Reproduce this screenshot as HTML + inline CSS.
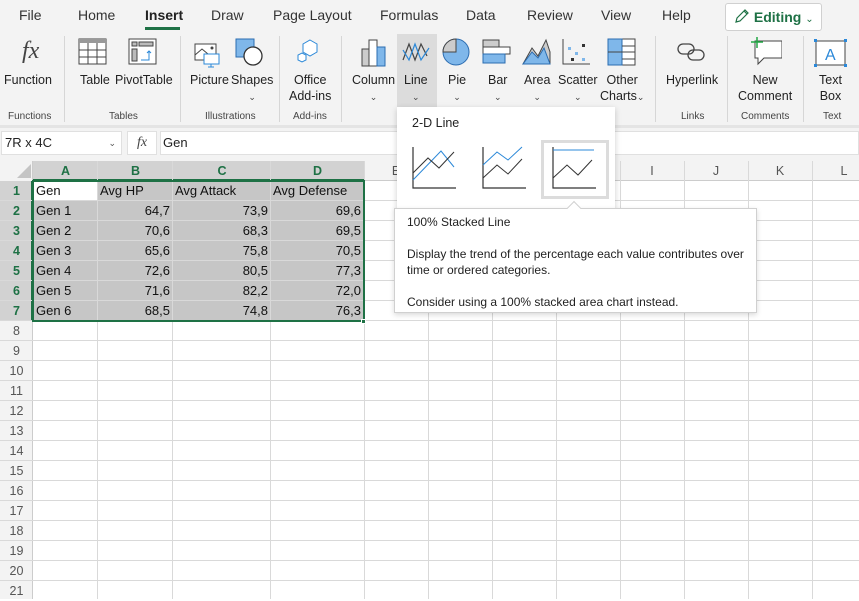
<!DOCTYPE html>
<html><head><meta charset="utf-8"><style>
*{margin:0;padding:0;box-sizing:border-box}
body{width:859px;height:599px;overflow:hidden;background:#fff;font-family:"Liberation Sans",sans-serif;font-size:13px;color:#222;position:relative}
.a{position:absolute}
.tab{position:absolute;top:7px;font-size:14px;color:#333}
.lbl{position:absolute;font-size:12.5px;color:#222;text-align:center;line-height:16px}
.gl{position:absolute;top:111px;font-size:10px;color:#444;text-align:center}
.sep{position:absolute;top:36px;width:1px;height:86px;background:#d6d6d6}
.chev{font-size:9px;color:#444}
.vl{position:absolute;top:161px;width:1px;height:438px;background:#d9d9d9}
.hl{position:absolute;left:0;width:859px;height:1px;background:#d9d9d9}
.rh{position:absolute;left:0;width:33px;text-align:center;font-size:12.5px;color:#555;line-height:20px}
.ch{position:absolute;top:161px;height:20px;line-height:20px;text-align:center;font-size:12.5px;color:#555}
.c{position:absolute;height:20px;line-height:20px;font-size:13px;color:#111;padding:0 3px}
.r{text-align:right}
</style></head><body>
<div class="a" style="left:0;top:0;width:859px;height:127px;background:#f3f3f3"></div>
<div class="a" style="left:0;top:125px;width:859px;height:3px;background:#e4e4e4"></div>
<div class="tab" style="left:19px">File</div>
<div class="tab" style="left:78px">Home</div>
<div class="tab" style="left:145px;font-weight:bold;color:#222">Insert</div>
<div class="a" style="left:145px;top:27px;width:35px;height:3px;background:#1e7145"></div>
<div class="tab" style="left:211px">Draw</div>
<div class="tab" style="left:273px">Page Layout</div>
<div class="tab" style="left:380px">Formulas</div>
<div class="tab" style="left:466px">Data</div>
<div class="tab" style="left:527px">Review</div>
<div class="tab" style="left:601px">View</div>
<div class="tab" style="left:662px">Help</div>
<div class="a" style="left:725px;top:3px;width:97px;height:28px;background:#fff;border:1px solid #d0d0d0;border-radius:3px;color:#1e7145;font-size:14px;font-weight:bold;line-height:26px;padding-left:8px">
<svg width="16" height="16" viewBox="0 0 16 16" style="vertical-align:-2px"><path d="M2 14 L3 10 L11 2 L14 5 L6 13 Z M10 3 L13 6" fill="none" stroke="#1e7145" stroke-width="1.2"/></svg> Editing <span style="font-weight:normal;font-size:10px">&#8964;</span></div>

<div class="a" style="left:22px;top:38px;font-family:'Liberation Serif',serif;font-style:italic;font-size:24px;color:#444">fx</div>
<svg class="a" style="left:78px;top:38px" width="30" height="28"><rect x="1" y="1" width="27" height="25" fill="#fff" stroke="#444"/><rect x="1" y="1" width="27" height="4" fill="#999"/><path d="M10 5V26M19 5V26M1 12H28M1 19H28" stroke="#444"/></svg>
<svg class="a" style="left:128px;top:38px" width="30" height="28"><rect x="1" y="1" width="27" height="25" fill="#fff" stroke="#444"/><rect x="4" y="4" width="5" height="4" fill="#bbb" stroke="#444"/><rect x="11" y="4" width="14" height="4" fill="#bbb" stroke="#444"/><rect x="4" y="11" width="5" height="12" fill="#bbb" stroke="#444"/><path d="M13 22H21V13M19 15L21 13L23 15" fill="none" stroke="#2b88d8"/></svg>
<svg class="a" style="left:194px;top:40px" width="32" height="30"><path d="M1 4H22V20H1Z" fill="#fff" stroke="#444"/><path d="M1 15L8 9L14 14" fill="none" stroke="#444"/><circle cx="18" cy="8" r="1.5" fill="#444"/><rect x="10" y="14" width="15" height="10" fill="#fff" stroke="#2b88d8"/><path d="M17 24V27M14 27H20" stroke="#2b88d8"/></svg>
<svg class="a" style="left:235px;top:38px" width="30" height="30"><rect x="1" y="1" width="18" height="18" fill="#7fb7ea" stroke="#2b6cb0"/><circle cx="18" cy="18" r="9" fill="#fff" stroke="#333" stroke-width="1.3"/></svg>
<svg class="a" style="left:295px;top:38px" width="32" height="30"><path d="M15 2L22 6V14L15 18L8 14V6Z" fill="#fff" stroke="#2b88d8"/><path d="M7 15L11 17V22L7 24L3 22V17Z" fill="#fff" stroke="#2b88d8"/></svg>
<svg class="a" style="left:360px;top:38px" width="28" height="30"><rect x="2" y="11" width="7" height="17" fill="#ccc" stroke="#444"/><rect x="9" y="2" width="8" height="26" fill="#fff" stroke="#444"/><rect x="17" y="9" width="8" height="19" fill="#7fb7ea" stroke="#2b6cb0"/></svg>
<div class="a" style="left:397px;top:34px;width:40px;height:73px;background:#dcdcdc"></div>
<svg class="a" style="left:402px;top:38px" width="30" height="28"><path d="M1 22L7 6L13 22L19 6L25 18" fill="none" stroke="#444" stroke-width="1.2"/><path d="M1 12L7 22L13 6L19 22L27 10" fill="none" stroke="#2b88d8" stroke-width="1.2"/></svg>
<svg class="a" style="left:442px;top:38px" width="30" height="30"><circle cx="14" cy="14" r="13" fill="#7fb7ea" stroke="#2b6cb0"/><path d="M14 14V1A13 13 0 0 0 1 14Z" fill="#ccc" stroke="#444"/></svg>
<svg class="a" style="left:482px;top:38px" width="30" height="28"><rect x="1" y="2" width="16" height="7" fill="#ccc" stroke="#444"/><rect x="1" y="9" width="27" height="7" fill="#fff" stroke="#444"/><rect x="1" y="16" width="22" height="9" fill="#7fb7ea" stroke="#2b6cb0"/></svg>
<svg class="a" style="left:522px;top:38px" width="30" height="28"><path d="M1 26L10 10L16 18L24 2L28 14V26Z" fill="#ccc" stroke="#444"/><path d="M1 26L10 14L16 20L22 10L28 26Z" fill="#7fb7ea" stroke="#2b6cb0"/></svg>
<svg class="a" style="left:562px;top:38px" width="30" height="28"><path d="M1 1V26H28" fill="none" stroke="#444"/><rect x="6" y="9" width="3" height="3" fill="#7fb7ea"/><rect x="13" y="14" width="3" height="3" fill="#7fb7ea"/><rect x="20" y="20" width="3" height="3" fill="#7fb7ea"/><rect x="20" y="6" width="3" height="3" fill="#333"/><rect x="9" y="20" width="3" height="3" fill="#333"/></svg>
<svg class="a" style="left:607px;top:38px" width="30" height="28"><rect x="1" y="1" width="27" height="26" fill="#fff" stroke="#444"/><rect x="1" y="1" width="14" height="26" fill="#7fb7ea" stroke="#2b6cb0"/><path d="M1 14H15M15 8H28M15 14H28M15 21H28" stroke="#444"/></svg>
<svg class="a" style="left:676px;top:40px" width="32" height="24"><rect x="2" y="4" width="16" height="10" rx="5" fill="none" stroke="#444" stroke-width="1.3"/><rect x="12" y="10" width="16" height="10" rx="5" fill="none" stroke="#444" stroke-width="1.3"/></svg>
<svg class="a" style="left:748px;top:36px" width="34" height="32"><path d="M7 5H34V22H16L10 28V22H7Z" fill="#fff" stroke="#444"/><path d="M9 1V12M3 6H15" stroke="#22a745" stroke-width="1.5"/></svg>
<svg class="a" style="left:814px;top:38px" width="34" height="30"><rect x="2" y="3" width="29" height="24" fill="#fff" stroke="#444"/><rect x="0" y="1" width="3" height="3" fill="#2b88d8"/><rect x="30" y="1" width="3" height="3" fill="#2b88d8"/><rect x="0" y="26" width="3" height="3" fill="#2b88d8"/><rect x="30" y="26" width="3" height="3" fill="#2b88d8"/><text x="11" y="22" font-size="16" fill="#2b88d8" font-family="Liberation Sans">A</text></svg>

<div class="lbl" style="left:4px;top:72px">Function</div>
<div class="lbl" style="left:80px;top:72px">Table</div>
<div class="lbl" style="left:115px;top:72px">PivotTable</div>
<div class="lbl" style="left:190px;top:72px">Picture</div>
<div class="lbl" style="left:231px;top:72px">Shapes<br><span class="chev">&#8964;</span></div>
<div class="lbl" style="left:289px;top:72px">Office<br>Add-ins</div>
<div class="lbl" style="left:352px;top:72px">Column<br><span class="chev">&#8964;</span></div>
<div class="lbl" style="left:404px;top:72px">Line<br><span class="chev">&#8964;</span></div>
<div class="lbl" style="left:448px;top:72px">Pie<br><span class="chev">&#8964;</span></div>
<div class="lbl" style="left:488px;top:72px">Bar<br><span class="chev">&#8964;</span></div>
<div class="lbl" style="left:524px;top:72px">Area<br><span class="chev">&#8964;</span></div>
<div class="lbl" style="left:558px;top:72px">Scatter<br><span class="chev">&#8964;</span></div>
<div class="lbl" style="left:600px;top:72px">Other<br>Charts<span class="chev">&#8964;</span></div>
<div class="lbl" style="left:666px;top:72px">Hyperlink</div>
<div class="lbl" style="left:738px;top:72px">New<br>Comment</div>
<div class="lbl" style="left:819px;top:72px">Text<br>Box</div>

<div class="sep" style="left:64px"></div><div class="sep" style="left:180px"></div><div class="sep" style="left:279px"></div><div class="sep" style="left:341px"></div><div class="sep" style="left:655px"></div><div class="sep" style="left:727px"></div><div class="sep" style="left:803px"></div>
<div class="gl" style="left:8px">Functions</div>
<div class="gl" style="left:109px">Tables</div>
<div class="gl" style="left:205px">Illustrations</div>
<div class="gl" style="left:293px">Add-ins</div>
<div class="gl" style="left:681px">Links</div>
<div class="gl" style="left:741px">Comments</div>
<div class="gl" style="left:823px">Text</div>

<div class="a" style="left:0;top:128px;width:859px;height:33px;background:#f3f3f3"></div>
<div class="a" style="left:1px;top:131px;width:121px;height:24px;background:#fff;border:1px solid #e0e0e0;font-size:13px;line-height:22px;padding-left:3px">7R x 4C<span style="position:absolute;right:5px;font-size:9px;color:#555">&#8964;</span></div>
<div class="a" style="left:127px;top:131px;width:30px;height:24px;background:#fff;border:1px solid #e0e0e0;text-align:center;font-family:'Liberation Serif',serif;font-style:italic;font-size:14px;line-height:22px;color:#444">fx</div>
<div class="a" style="left:160px;top:131px;width:699px;height:24px;background:#fff;border:1px solid #e0e0e0;font-size:13px;line-height:22px;padding-left:2px">Gen</div>

<div class="a" style="left:0;top:161px;width:859px;height:20px;background:#f3f3f3;border-bottom:1px solid #ccc"></div>
<div class="a" style="left:33px;top:161px;width:331px;height:20px;background:#d2d2d2;border-bottom:2px solid #1e7145"></div>
<div class="a" style="left:0;top:161px;width:33px;height:438px;background:#f3f3f3;border-right:1px solid #ccc"></div>
<div class="a" style="left:0;top:181px;width:33px;height:140px;background:#d2d2d2;border-right:2px solid #1e7145"></div>
<svg class="a" style="left:17px;top:164px" width="15" height="15"><path d="M14 0V14H0Z" fill="#c4c4c4"/></svg>
<div class="a" style="left:33px;top:181px;width:331px;height:140px;background:#c6c6c6"></div>
<div class="a" style="left:34px;top:182px;width:63px;height:18px;background:#fff"></div>

<div class="vl" style="left:97px"></div><div class="vl" style="left:172px"></div><div class="vl" style="left:270px"></div><div class="vl" style="left:364px"></div><div class="vl" style="left:428px"></div><div class="vl" style="left:492px"></div><div class="vl" style="left:556px"></div><div class="vl" style="left:620px"></div><div class="vl" style="left:684px"></div><div class="vl" style="left:748px"></div><div class="vl" style="left:812px"></div>
<div class="hl" style="top:200px"></div><div class="hl" style="top:220px"></div><div class="hl" style="top:240px"></div><div class="hl" style="top:260px"></div><div class="hl" style="top:280px"></div><div class="hl" style="top:300px"></div><div class="hl" style="top:320px"></div><div class="hl" style="top:340px"></div><div class="hl" style="top:360px"></div><div class="hl" style="top:380px"></div><div class="hl" style="top:400px"></div><div class="hl" style="top:420px"></div><div class="hl" style="top:440px"></div><div class="hl" style="top:460px"></div><div class="hl" style="top:480px"></div><div class="hl" style="top:500px"></div><div class="hl" style="top:520px"></div><div class="hl" style="top:540px"></div><div class="hl" style="top:560px"></div><div class="hl" style="top:580px"></div>

<div class="ch" style="left:33px;width:65px;color:#1e7145;font-weight:bold">A</div>
<div class="ch" style="left:98px;width:75px;color:#1e7145;font-weight:bold">B</div>
<div class="ch" style="left:173px;width:98px;color:#1e7145;font-weight:bold">C</div>
<div class="ch" style="left:271px;width:93px;color:#1e7145;font-weight:bold">D</div>
<div class="ch" style="left:364px;width:64px">E</div><div class="ch" style="left:620px;width:64px">I</div><div class="ch" style="left:684px;width:64px">J</div><div class="ch" style="left:748px;width:64px">K</div><div class="ch" style="left:812px;width:64px">L</div>

<div class="rh" style="top:181px;color:#1e7145;font-weight:bold">1</div><div class="rh" style="top:201px;color:#1e7145;font-weight:bold">2</div><div class="rh" style="top:221px;color:#1e7145;font-weight:bold">3</div><div class="rh" style="top:241px;color:#1e7145;font-weight:bold">4</div><div class="rh" style="top:261px;color:#1e7145;font-weight:bold">5</div><div class="rh" style="top:281px;color:#1e7145;font-weight:bold">6</div><div class="rh" style="top:301px;color:#1e7145;font-weight:bold">7</div>
<div class="rh" style="top:321px">8</div><div class="rh" style="top:341px">9</div><div class="rh" style="top:361px">10</div><div class="rh" style="top:381px">11</div><div class="rh" style="top:401px">12</div><div class="rh" style="top:421px">13</div><div class="rh" style="top:441px">14</div><div class="rh" style="top:461px">15</div><div class="rh" style="top:481px">16</div><div class="rh" style="top:501px">17</div><div class="rh" style="top:521px">18</div><div class="rh" style="top:541px">19</div><div class="rh" style="top:561px">20</div><div class="rh" style="top:581px">21</div>

<div class="c" style="left:33px;top:181px">Gen</div><div class="c" style="left:97px;top:181px">Avg HP</div><div class="c" style="left:172px;top:181px">Avg Attack</div><div class="c" style="left:270px;top:181px">Avg Defense</div>
<div class="c" style="left:33px;top:201px">Gen 1</div><div class="c r" style="left:97px;top:201px;width:76px">64,7</div><div class="c r" style="left:172px;top:201px;width:99px">73,9</div><div class="c r" style="left:270px;top:201px;width:94px">69,6</div>
<div class="c" style="left:33px;top:221px">Gen 2</div><div class="c r" style="left:97px;top:221px;width:76px">70,6</div><div class="c r" style="left:172px;top:221px;width:99px">68,3</div><div class="c r" style="left:270px;top:221px;width:94px">69,5</div>
<div class="c" style="left:33px;top:241px">Gen 3</div><div class="c r" style="left:97px;top:241px;width:76px">65,6</div><div class="c r" style="left:172px;top:241px;width:99px">75,8</div><div class="c r" style="left:270px;top:241px;width:94px">70,5</div>
<div class="c" style="left:33px;top:261px">Gen 4</div><div class="c r" style="left:97px;top:261px;width:76px">72,6</div><div class="c r" style="left:172px;top:261px;width:99px">80,5</div><div class="c r" style="left:270px;top:261px;width:94px">77,3</div>
<div class="c" style="left:33px;top:281px">Gen 5</div><div class="c r" style="left:97px;top:281px;width:76px">71,6</div><div class="c r" style="left:172px;top:281px;width:99px">82,2</div><div class="c r" style="left:270px;top:281px;width:94px">72,0</div>
<div class="c" style="left:33px;top:301px">Gen 6</div><div class="c r" style="left:97px;top:301px;width:76px">68,5</div><div class="c r" style="left:172px;top:301px;width:99px">74,8</div><div class="c r" style="left:270px;top:301px;width:94px">76,3</div>
<div class="a" style="left:32px;top:180px;width:333px;height:142px;border:2px solid #1e7145"></div>
<div class="a" style="left:361px;top:319px;width:5px;height:5px;background:#1e7145;border:1px solid #fff"></div>

<div class="a" style="left:397px;top:107px;width:218px;height:104px;background:#fff;box-shadow:0 2px 6px rgba(0,0,0,.2)"></div>
<div class="a" style="left:412px;top:116px;font-size:12.5px;color:#222">2-D Line</div>
<svg class="a" style="left:410px;top:145px" width="50" height="50"><path d="M3 2V43H46" fill="none" stroke="#333" stroke-width="1.2"/><path d="M3 35L31 6L44 22" fill="none" stroke="#2b88d8"/><path d="M3 28L18 13L29 23L44 7" fill="none" stroke="#333"/></svg>
<svg class="a" style="left:480px;top:145px" width="50" height="50"><path d="M3 2V43H46" fill="none" stroke="#333" stroke-width="1.2"/><path d="M3 20L17 7L28 15L42 2" fill="none" stroke="#2b88d8"/><path d="M3 33L17 20L28 29L42 14" fill="none" stroke="#333"/></svg>
<div class="a" style="left:541px;top:140px;width:68px;height:59px;background:#fff;border:3px solid #dcdcdc"></div>
<svg class="a" style="left:550px;top:145px" width="50" height="50"><path d="M3 2V43H46" fill="none" stroke="#333" stroke-width="1.2"/><path d="M3 5H44" stroke="#2b88d8"/><path d="M3 33L17 20L28 30L42 15" fill="none" stroke="#333"/></svg>

<div class="a" style="left:394px;top:208px;width:363px;height:105px;background:#fff;border:1px solid #d0d0d0;box-shadow:0 2px 5px rgba(0,0,0,.15);font-size:12px;color:#222;line-height:16px;padding:5px 12px">
100% Stacked Line<br><br>Display the trend of the percentage each value contributes over time or ordered categories.<br><br>Consider using a 100% stacked area chart instead.</div>
<div class="a" style="left:569px;top:203px;width:10px;height:10px;background:#fff;border-left:1px solid #d0d0d0;border-top:1px solid #d0d0d0;transform:rotate(45deg)"></div>
</body></html>
